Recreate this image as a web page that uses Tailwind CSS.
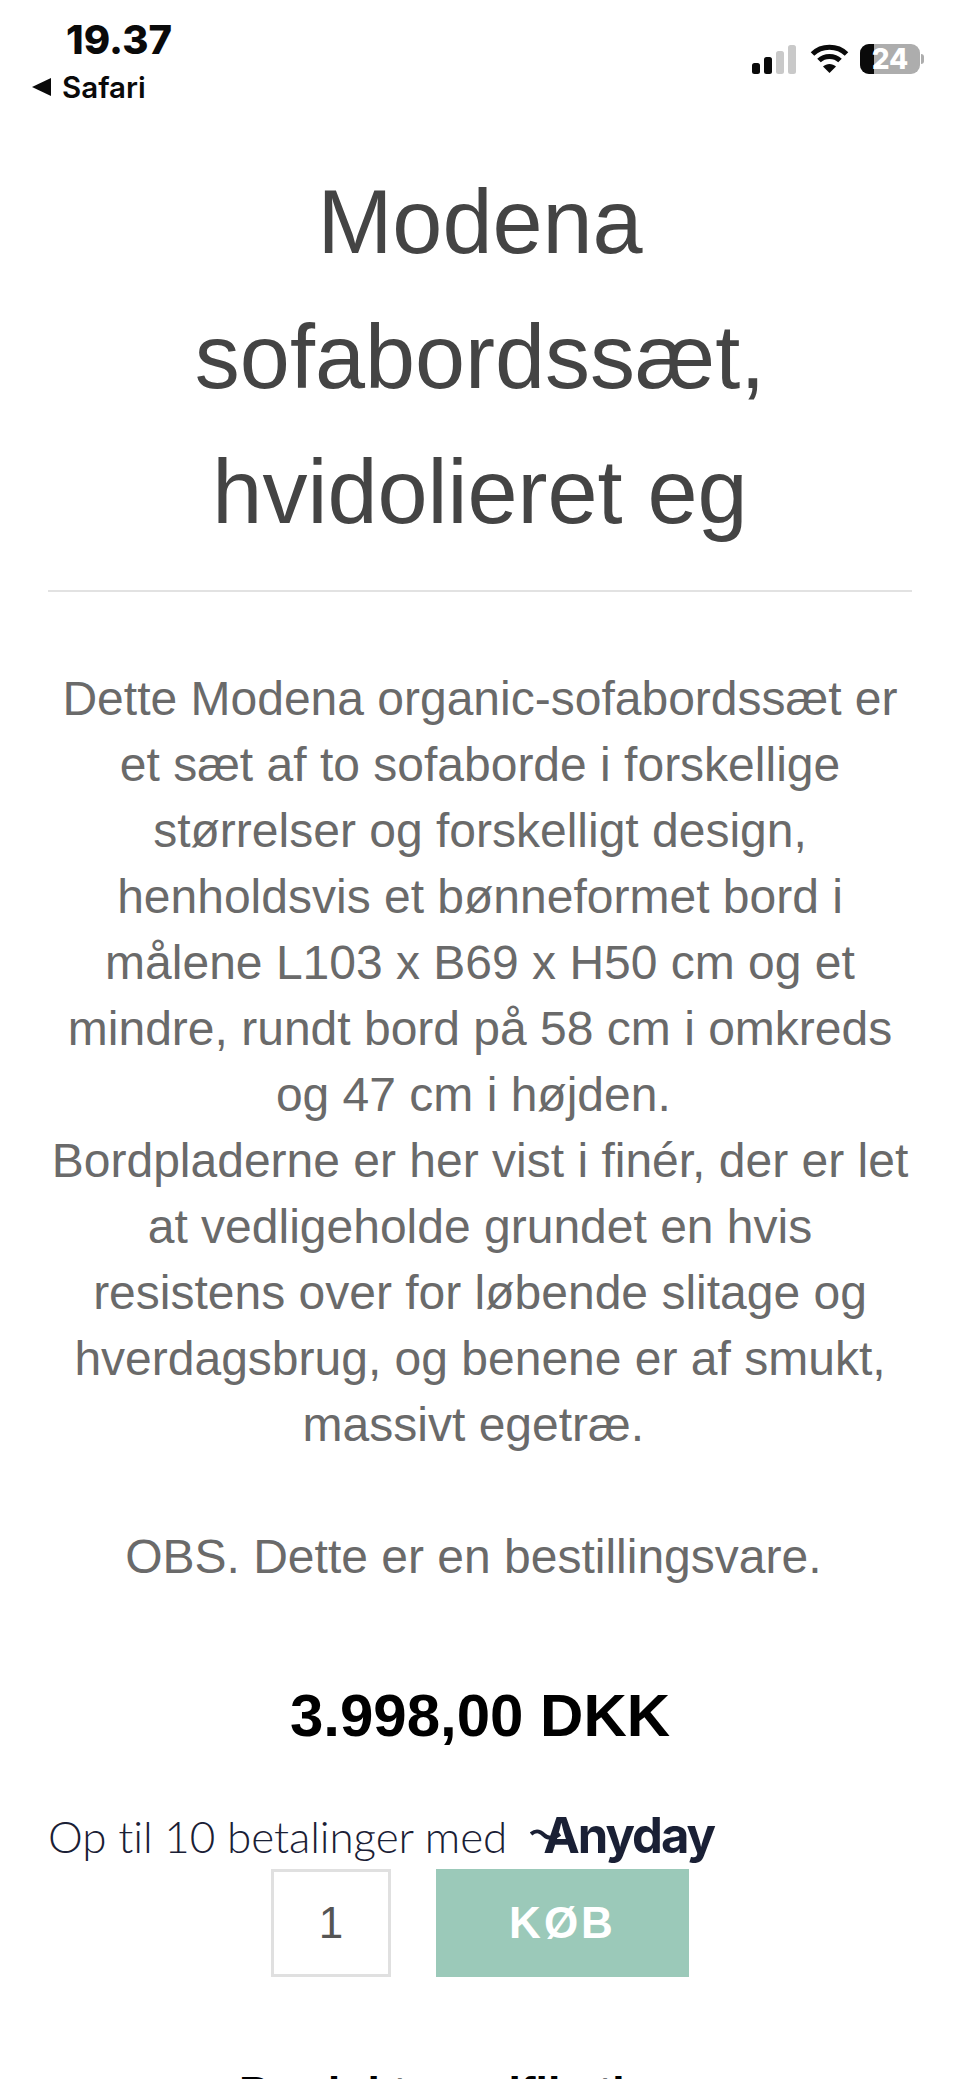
<!DOCTYPE html>
<html lang="da">
<head>
    <meta charset="UTF-8">
    <meta name="viewport" content="width=device-width, initial-scale=1.0">
    <title>Modena sofabordssæt</title>
    <script src="https://cdn.jsdelivr.net/npm/@tailwindcss/browser@4"></script>
</head>
<body class="bg-white font-['Liberation_Sans',sans-serif]">
    <div class="h-[2079px] overflow-hidden">

        <!-- status bar -->
        <header class="h-[120px] flex justify-between font-['Inter',sans-serif] text-[#0a0a0a]">
            <div class="pl-[32px] pt-[17px]">
                <div class="pl-[34px] text-[40px] leading-[46px] font-extrabold">19.37</div>
                <div class="flex items-center gap-[10px] mt-[4px]">
                    <svg width="20" height="18" viewBox="0 0 20 18"><path d="M0 9 19 0v18z" fill="#0a0a0a"/></svg>
                    <span class="text-[29.500px] leading-[40px] font-semibold">Safari</span>
                </div>
            </div>
            <div class="flex items-center gap-[11px] pr-[36px] h-[118px]">
                <svg class="mr-[2px]" width="45" height="29" viewBox="0 0 45 29">
                    <rect x="0" y="18" width="8" height="11" rx="2.5" fill="#0a0a0a"/>
                    <rect x="12" y="12" width="8" height="17" rx="2.5" fill="#0a0a0a"/>
                    <rect x="24" y="6" width="8" height="23" rx="2.5" fill="#c9c9c9"/>
                    <rect x="36" y="0" width="8" height="29" rx="2.5" fill="#c9c9c9"/>
                </svg>
                <svg width="39" height="30" viewBox="0 0 38 30" fill="none" stroke="#0a0a0a" stroke-width="5">
                    <path d="M2 10C11 1 27 1 36 10"/>
                    <path d="M8.500 16.500C14 11 24 11 29.500 16.500"/>
                    <path d="M19 29 12.500 22.500C16 19 22 19 25.500 22.500z" fill="#0a0a0a" stroke="none"/>
                </svg>
                <div class="flex items-center">
                    <div class="relative w-[60px] h-[30px] rounded-[9px] bg-[#adadad] flex items-center justify-center">
                        <div class="absolute left-0 top-0 h-full w-[14px] rounded-l-[9px] bg-[#0a0a0a]"></div>
                        <span class="relative text-[28px] leading-[30px] font-extrabold text-white">24</span>
                    </div>
                    <div class="w-[3px] h-[10px] ml-[1px] rounded-r bg-[#adadad]"></div>
                </div>
            </div>
        </header>

        <main class="px-[48px] text-center">
            <h1 class="pt-[35px] pb-[30px] text-[90px] leading-[135px] text-[#444444] border-b-2 border-[#e2e2e2] px-[60px]">Modena sofabordssæt, hvidolieret eg</h1>

            <div class="mt-[74px] text-[48px] leading-[66px] text-[#6a6a6a]">
                <p>Dette Modena organic-sofabordssæt er<br>et sæt af to sofaborde i forskellige<br>størrelser og forskelligt design,<br>henholdsvis et bønneformet bord i<br>målene L103 x B69 x H50 cm og et<br>mindre, rundt bord på 58 cm i omkreds<br>og 47 cm i højden.&nbsp;<br>Bordpladerne er her vist i finér, der er let<br>at vedligeholde grundet en hvis<br>resistens over for løbende slitage og<br>hverdagsbrug, og benene er af smukt,<br>massivt egetræ.&nbsp;</p>
                <p class="mt-[66px]">OBS. Dette er en bestillingsvare.&nbsp;</p>
            </div>

            <div class="mt-[90px] text-[60px] leading-[72px] font-bold text-black">3.998,00 DKK</div>

            <!-- anyday -->
            <div class="mt-[51px] h-[66px] flex items-center gap-[23px] text-left">
                <span class="font-['Lato',sans-serif] font-light text-[44px] tracking-[-0.1px] text-[#1a2035]">Op til 10 betalinger med</span>
                <span class="relative pl-[13px] font-['Inter',sans-serif] font-bold text-[49px] tracking-[-2px] text-[#1a2035]">Anyday<svg class="absolute left-0 top-[28px]" width="32" height="16" viewBox="0 0 32 16" fill="none" stroke="#1a2035" stroke-width="4"><path d="M1 7C7 2 11 5 14 8 18 12 24 11 30 7"/></svg></span>
            </div>

            <div class="flex justify-center gap-[45px]">
                <div class="w-[120px] h-[108px] border-[3px] border-[#e0e0e0] flex items-center justify-center text-[44px] text-[#555555]">1</div>
                <button class="w-[253px] h-[108px] bg-[#9bc9b9] text-white text-[44px] font-bold tracking-[3px]">KØB</button>
            </div>

            <h2 class="mt-[86px] text-[44.500px] leading-[60px] font-bold text-black">Produktspecifikationer</h2>
        </main>
    </div>
</body>
</html>
